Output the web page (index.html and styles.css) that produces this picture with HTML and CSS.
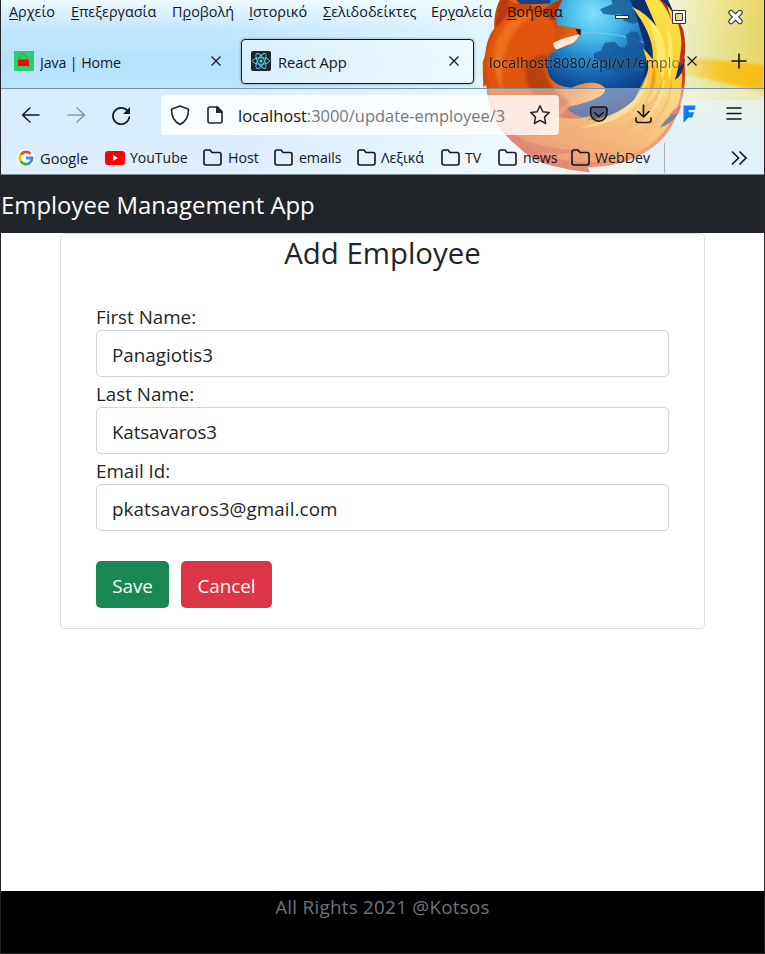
FILE: index.html
```html
<!DOCTYPE html>
<html lang="el">
<head>
<meta charset="utf-8">
<title>React App</title>
<link rel="stylesheet" href="styles.css">
</head>
<body>
<div class="window">
<header class="browser">
  <svg class="theme" viewBox="0 0 765 175" aria-hidden="true">
    <defs>
      <linearGradient id="fur" x1="0" y1="0" x2=".6" y2="1"><stop offset="0" stop-color="#ee6a1c"/><stop offset=".35" stop-color="#dc4a0c"/><stop offset=".7" stop-color="#d0350c"/><stop offset="1" stop-color="#e5601c"/></linearGradient>
      <radialGradient id="sea" gradientUnits="userSpaceOnUse" cx="370" cy="40" r="300"><stop offset="0" stop-color="#7fe0fb"/><stop offset=".25" stop-color="#4cbcea"/><stop offset=".5" stop-color="#1c7cc4"/><stop offset=".75" stop-color="#0f4c98"/><stop offset="1" stop-color="#0a2c6c"/></radialGradient>
      <linearGradient id="flame" gradientUnits="userSpaceOnUse" x1="560" y1="30" x2="340" y2="500"><stop offset="0" stop-color="#ffe048"/><stop offset=".4" stop-color="#fac62e"/><stop offset=".65" stop-color="#f59c20"/><stop offset="1" stop-color="#e4601a"/></linearGradient>
      <linearGradient id="arm" gradientUnits="userSpaceOnUse" x1="200" y1="200" x2="400" y2="280"><stop offset="0" stop-color="#c9480c"/><stop offset=".5" stop-color="#ea7a26"/><stop offset="1" stop-color="#fbae58"/></linearGradient>
      <linearGradient id="pale" x1="0" y1="0" x2="0" y2="1"><stop offset="0" stop-color="#cdeaf8" stop-opacity="0"/><stop offset=".6" stop-color="#cdeaf8" stop-opacity=".9"/><stop offset="1" stop-color="#cdeaf8"/></linearGradient>
      <linearGradient id="sun" x1="0" y1="0" x2="1" y2="0"><stop offset="0" stop-color="#ecd650" stop-opacity="0"/><stop offset=".5" stop-color="#ecd650" stop-opacity=".5"/><stop offset="1" stop-color="#e8cf48" stop-opacity=".85"/></linearGradient>
      <linearGradient id="gold" x1="0" y1="0" x2="1" y2="0"><stop offset="0" stop-color="#fabb08" stop-opacity="0"/><stop offset=".5" stop-color="#fabb08" stop-opacity=".8"/><stop offset="1" stop-color="#fabb08"/></linearGradient>
      <filter id="soft" x="-30%" y="-30%" width="160%" height="160%"><feGaussianBlur stdDeviation="5"/></filter>
      <filter id="edge"><feGaussianBlur stdDeviation="1.500"/></filter>
    </defs>
    <g transform="translate(470 0) scale(.33333)">
      <path d="M600 0H920V300H600Z" fill="url(#sun)"/>
      <path d="M600 175Q770 175 940 205V300Q800 250 600 215Z" fill="url(#gold)" filter="url(#soft)"/>
      <path d="M0 225Q60 205 120 195" fill="none" stroke="#f6e3b4" stroke-width="12" opacity=".5" filter="url(#soft)"/>
      <path d="M500 250H920V530H500Z" fill="url(#pale)"/>
      <g filter="url(#edge)">
        <path d="M95-10Q70 35 73 85Q48 120 46 165L38 185Q38 225 40 262L48 250Q50 285 60 325Q90 400 145 440Q195 490 262 500Q310 513 360 517L352 502Q450 500 510 465Q590 425 618 350Q655 265 642 180L632 90L590 10L570-10Z" fill="url(#fur)"/>
        <path d="M180-10L245 20V85L230 230Q270 330 330 350Q450 370 520 290L600 150L540-10Z" fill="url(#sea)"/>
        <path d="M130-10H245L240 10Q180 15 150 12Z" fill="#1c3f86"/>
        <path d="M335 100Q420 90 530 130" fill="none" stroke="#8fdcf5" stroke-width="4" opacity=".5"/>
        <path d="M420-10L428 12 408 20 390 28 400 42 430 45 452 42 462 62 492 72 512 60 500 20 490-10ZM372 160L392 152 405 128 435 125 450 142 465 143 472 130 468 105 485 93 505 98 512 125 535 150 530 235 500 212 482 222 455 235 440 218 432 209 405 213 398 190 385 180 372 177Z" fill="#155893" opacity=".8"/>
        <path d="M478-10H590L632 85L618 260L500 330Q535 200 522 130Q505 60 478-10Z" fill="#0a2f70"/>
        <path d="M560-12Q615 30 640 90Q650 140 642 180L625 130L580 40Z" fill="#c62f10"/>
        <path d="M486 20Q530 40 560 80L520 -10H560Q590 20 608 70L592 18Q634 62 634 135L622 235L636 215Q640 290 610 350Q560 450 440 480Q300 505 200 455Q140 420 110 370Q200 420 262 350Q320 365 370 345L350 362Q440 350 492 300Q530 250 535 205Q528 175 520 145L548 178Q555 110 486 20Z" fill="url(#flame)"/>
        <path d="M560 80Q600 130 578 235L560 180Q565 130 535 60ZM596 90Q618 130 600 240L588 190Q602 150 590 95Z" fill="#fff07a" opacity=".75"/>
        <path d="M548 178Q575 250 520 320Q570 285 575 235Q590 320 480 390Q420 425 340 420Q440 400 500 345Q550 290 548 178ZM604 240Q610 320 540 390Q480 440 400 455Q520 410 575 330Q600 285 604 240Z" fill="#ed8d1c" opacity=".7"/>
        <path d="M534 215Q535 270 490 322Q430 375 330 385Q440 350 492 300ZM585 240Q580 320 500 385Q570 310 575 245Z" fill="#ffe578" opacity=".6"/>
        <path d="M645 175Q642 225 615 240L628 190ZM628 330Q595 345 570 382Q600 375 622 345Z" fill="#1c2f6e"/>
        <path d="M640 190L642 150 628 200ZM634 315Q612 325 596 348L626 340Z" fill="#c23222"/>
        <path d="M60 325Q100 400 190 430Q270 455 350 450Q270 470 200 455Q290 495 420 485L352 502L360 517Q310 513 262 500Q195 490 145 440Q85 395 60 325Z" fill="#cf3414" opacity=".75"/>
        <path d="M95-10Q70 30 74 84Q54 110 48 150L44 195Q40 240 44 262L52 245Q55 320 100 360Q190 410 262 352L295 320Q367 306 395 285Q410 275 403 262Q390 247 365 248Q340 247 303 263Q262 262 242 235Q225 205 232 180Q240 155 265 148L290 138Q325 130 332 95Q325 82 300 81L262 76Q250 40 275-2Q240 8 215 30Q180 10 135 10Z" fill="url(#arm)"/>
        <path d="M100 60Q150 15 215 32Q250 55 255 85Q262 120 235 160Q205 210 240 262Q262 300 300 316Q270 350 235 365Q140 390 85 330Q40 260 50 160Q60 95 100 60Z" fill="#e2540f" filter="url(#soft)"/>
        <path d="M110 70Q150 30 200 45Q140 70 115 130Q85 200 100 280Q55 200 80 120Z" fill="#f57f2c" opacity=".6" filter="url(#soft)"/>
        <path d="M165 190Q160 290 240 325Q280 315 300 305Q240 270 222 215Q222 185 235 165Q190 160 165 190Z" fill="#a33208" opacity=".6" filter="url(#soft)"/>
        <path d="M222 40Q240 10 278-4Q262 30 250 62Z" fill="#b83010"/>
        <path d="M250 128Q285 112 328 103Q320 130 290 136L262 148Q250 145 250 128Z" fill="#fbe8d8"/>
        <path d="M316 86L333 88 332 106 324 102Z" fill="#251d23"/>
        <path d="M76 84L90 0H112Q120 40 82 78Z" fill="#b93a13"/>
      </g>
    </g>
  </svg>

  <nav class="menubar">
    <span class="menus"><span><u>Α</u>ρχείο</span><span><u>Ε</u>πεξεργασία</span><span>Π<u>ρ</u>οβολή</span><span><u>Ι</u>στορικό</span><span><u>Σ</u>ελιδοδείκτες</span><span>Ερ<u>γ</u>αλεία</span><span><u>Β</u>οήθεια</span></span>
    <svg class="wincontrols" viewBox="610 0 140 30" width="140" height="30">
      <rect x="615.500" y="15.500" width="13" height="3" fill="#fff" stroke="#333"/>
      <path d="M672.500 10.500h13v13h-13z" fill="#fff" stroke="#333"/><path d="M675.500 13.500h7v7h-7z" fill="#e9d98a" stroke="#333"/>
      <path d="M731 12.500l9 9M740 12.500l-9 9" stroke="#333" stroke-width="5.400" stroke-linecap="round"/>
      <path d="M731 12.500l9 9M740 12.500l-9 9" stroke="#fff" stroke-width="3.200" stroke-linecap="round"/>
    </svg>
  </nav>

  <div class="tabs">
    <div class="tab first">
      <svg width="20" height="20" viewBox="0 0 20 20"><path fill="#2ecc71" d="M0 0h20v20H0z"/><path d="M5 8l4-6 5 6" fill="none" stroke="#a06a35"/><path fill="#f00808" d="M4 8.500h11V15H4z"/></svg>
      <span class="title">Java | Home</span>
      <svg class="x" viewBox="0 0 12 12"><path d="M1.500 1.500l9 9m0-9l-9 9"/></svg>
    </div>
    <div class="tab active">
      <svg width="20" height="20" viewBox="0 0 20 20"><rect width="20" height="20" rx="2" fill="#20232a"/><g fill="none" stroke="#61dafb" stroke-width=".9"><ellipse cx="10" cy="10" rx="8.500" ry="3.300"/><ellipse cx="10" cy="10" rx="8.500" ry="3.300" transform="rotate(60 10 10)"/><ellipse cx="10" cy="10" rx="8.500" ry="3.300" transform="rotate(120 10 10)"/></g><circle cx="10" cy="10" r="1.500" fill="#61dafb"/></svg>
      <span class="title">React App</span>
      <svg class="x" viewBox="0 0 12 12"><path d="M1.500 1.500l9 9m0-9l-9 9"/></svg>
    </div>
    <div class="tab last">
      <span class="title fade">localhost:8080/api/v1/emplo</span>
      <svg class="x" viewBox="0 0 12 12"><path d="M1.500 1.500l9 9m0-9l-9 9"/></svg>
    </div>
    <svg class="plus" viewBox="0 0 16 16" width="16" height="16"><path d="M8 .5v15M.5 8h15" fill="none" stroke="#15141a" stroke-width="1.600"/></svg>
  </div>

  <div class="toolbar">
    <svg class="navicons" width="161" height="50" viewBox="1 90 161 50"><g fill="none" stroke="#111820" stroke-width="1.500" stroke-linecap="round" stroke-linejoin="round"><path d="M39 115H23m7-7l-7.500 7 7.500 7"/><path d="M68 115h16m-7-7l7.500 7-7.500 7" stroke="#8b9aa7"/><path d="M127.500 110.800A8.200 8.200 0 1 0 129.300 117" stroke-width="1.700"/></g><path d="M130 107v7h-7z" fill="#111820"/></svg>
    <div class="urlbar">
      <svg width="70" height="40" viewBox="161 94 70 40"><g fill="none" stroke="#25252c" stroke-width="1.600" stroke-linejoin="round"><path d="M180 105l8.500 3.200c0 7-2.300 12.300-8.500 15.300-6.200-3-8.500-8.300-8.500-15.300z"/><path d="M210 106h7.500l4.500 4.500V120q0 2-2 2h-10q-2 0-2-2v-12q0-2 2-2z"/></g><path d="M216 105l7 7h-7z" fill="#25252c"/></svg>
      <span class="url"><b>localhost</b>:3000/update-employee/3</span>
      <svg class="star" viewBox="0 0 22 22" width="22" height="22"><path d="M11 1.800l2.800 5.900 6.400.9-4.700 4.500 1.200 6.400-5.700-3.100-5.700 3.100 1.200-6.400-4.700-4.500 6.400-.9z" fill="none" stroke="#25252c" stroke-width="1.500" stroke-linejoin="round"/></svg>
    </div>
    <svg class="actions" viewBox="580 90 170 50" width="170" height="50"><g fill="none" stroke="#15141a" stroke-width="1.600" stroke-linecap="round" stroke-linejoin="round"><path d="M593 107h11.500q2.500 0 2.500 2.500v3.500a8.200 8.200 0 0 1-16.400 0v-3.500q0-2.500 2.400-2.500z" fill="#15141a" fill-opacity=".3"/><path d="M594.500 112.500l4.300 4 4.300-4M643.500 105v11.500m-5.500-5l5.500 5.500 5.500-5.500M636 118v2q0 2.500 2.500 2.500h10q2.500 0 2.500-2.500v-2"/><path d="M727 108h14M727 113.500h14M727 119h14" stroke-width="1.500"/></g><path d="M683.500 105.500H695.500l-.8 4.500h-6v2.300h5.500l-2 5.200h-3.700l-5 5.300v-16z" fill="#0d7bff"/></svg>
  </div>

  <nav class="bookmarks">
    <span class="bm google"><svg width="18" height="18" viewBox="0 0 18 18"><circle cx="9" cy="9" r="9" fill="#fff"/><g fill="none" stroke-width="2.800"><path d="M3.800 5.700A6 6 0 0 1 13.300 4.800" stroke="#ea4335"/><path d="M3.800 5.700a6.200 6.200 0 0 0 0 6.600" stroke="#fbbc05"/><path d="M3.800 12.200a6 6 0 0 0 9.200 1.400" stroke="#34a853"/><path d="M9 9h6a6 6 0 0 1-2 4.600" stroke="#4285f4"/></g></svg>Google</span>
    <span class="bm youtube"><svg width="20" height="14" viewBox="0 0 20 14"><rect width="20" height="14" rx="3" fill="#f00"/><path d="M8 4l5 3-5 3z" fill="#fff"/></svg>YouTube</span>
    <span class="bm host"><svg class="folder" viewBox="0 0 19 17"><path d="M1 3q0-2 2-2h4l2 2.500h7q2 0 2 2V14q0 2-2 2H3q-2 0-2-2z"/></svg>Host</span>
    <span class="bm emails"><svg class="folder" viewBox="0 0 19 17"><path d="M1 3q0-2 2-2h4l2 2.500h7q2 0 2 2V14q0 2-2 2H3q-2 0-2-2z"/></svg>emails</span>
    <span class="bm lexika"><svg class="folder" viewBox="0 0 19 17"><path d="M1 3q0-2 2-2h4l2 2.500h7q2 0 2 2V14q0 2-2 2H3q-2 0-2-2z"/></svg>Λεξικά</span>
    <span class="bm tv"><svg class="folder" viewBox="0 0 19 17"><path d="M1 3q0-2 2-2h4l2 2.500h7q2 0 2 2V14q0 2-2 2H3q-2 0-2-2z"/></svg>TV</span>
    <span class="bm news"><svg class="folder" viewBox="0 0 19 17"><path d="M1 3q0-2 2-2h4l2 2.500h7q2 0 2 2V14q0 2-2 2H3q-2 0-2-2z"/></svg>news</span>
    <span class="bm webdev"><svg class="folder" viewBox="0 0 19 17"><path d="M1 3q0-2 2-2h4l2 2.500h7q2 0 2 2V14q0 2-2 2H3q-2 0-2-2z"/></svg>WebDev</span>
    <svg class="more" viewBox="0 0 18 16" width="18" height="16"><path d="M2 1.500L8.500 8 2 14.500M9.500 1.500L16 8l-6.500 6.500" fill="none" stroke="#15141a" stroke-width="1.600"/></svg>
  </nav>
</header>

<div class="appbar"><span>Employee Management App</span></div>
<main>
  <form class="card">
    <h3><span>Add Employee</span></h3>
    <label for="first">First Name:</label>
    <input id="first" value="Panagiotis3">
    <label for="last">Last Name:</label>
    <input id="last" value="Katsavaros3">
    <label for="email">Email Id:</label>
    <input id="email" value="pkatsavaros3@gmail.com">
    <div class="buttons"><button type="button" class="save">Save</button><button type="button" class="cancel">Cancel</button></div>
  </form>
</main>
<footer><span>All Rights 2021 @Kotsos</span></footer>
</div>
</body>
</html>
```
FILE: styles.css
```css
* { box-sizing: border-box; }
body { margin: 0; font-family: "Open Sans", "Noto Sans", sans-serif; font-size: 18.8px; color: #212529; }
svg { display: block; flex: none; }
.window { width: 765px; height: 954px; display: flex; flex-direction: column; border: 1px solid #24262a; border-top: 0; background: #fff; overflow: hidden; }

.browser { position: relative; height: 175px; flex: none; margin: 0 -1px; border-left: 1px solid #24262a; border-right: 1px solid #24262a; border-bottom: 1px solid #7d8b95; font-size: 14.2px; color: #15141a; background: linear-gradient(180deg, #eef9ff 0, #c3e7ff 28px, #b5e2ff 60px, #bde5ff 90px, #c3e2fd 140px, #cbe7fd 175px); overflow: hidden; }
.browser::before { content: ""; position: absolute; inset: 0; background: linear-gradient(90deg, transparent 30%, rgba(235, 250, 255, .75) 63%, rgba(244, 245, 205, .8) 90%, rgba(235, 236, 180, .8)); }
.theme { position: absolute; left: -1px; top: 0; width: 765px; height: 175px; }
.menubar, .tabs, .toolbar, .bookmarks { position: relative; display: flex; align-items: center; }
.menubar { height: 36px; padding-left: 8px; align-items: flex-start; }
.menus { display: grid; grid-template-columns: 62px 101px 77px 74px 108px 76px 60px; line-height: 24px; width: 601px; white-space: nowrap; font-size: 14.4px; }
.menus u { text-underline-offset: 2px; text-decoration-thickness: 1px; }
.wincontrols { fill: none; }

.tabs { height: 53px; padding-bottom: 2px; border-bottom: 1px solid #7392a8; }
.tab { height: 45px; display: flex; align-items: center; white-space: nowrap; }
.tab .title { flex: 1; overflow: hidden; padding-top: 2px; }
.tab.first { width: 240px; padding: 0 19px 0 13px; }
.tab.first .title { margin-left: 6px; letter-spacing: -.1px; }
.tab.active { width: 233px; padding: 0 13px 0 9px; border: 1px solid #15141a; border-radius: 4px; background: rgba(255, 255, 255, .45); box-shadow: 0 0 3px rgba(0, 0, 0, .4); }
.tab.active .title { margin-left: 7px; font-size: 14.7px; }
.tab.last { width: 224px; padding-left: 15px; }
.fade { letter-spacing: .1px; -webkit-mask-image: linear-gradient(90deg, #000 80%, rgba(0, 0, 0, .35)); mask-image: linear-gradient(90deg, #000 80%, rgba(0, 0, 0, .35)); margin-right: 5px; text-shadow: 0 0 2px rgba(255, 255, 255, .35); }
.x { width: 12px; height: 12px; fill: none; stroke: #15141a; stroke-width: 1.2; }
.plus { margin-left: 33px; }

.toolbar { height: 51px; background: rgba(250, 250, 255, .42); }
.navicons { margin-right: -1px; }
.urlbar { width: 398px; height: 40px; display: flex; align-items: center; background: rgba(255, 255, 255, .8); border-radius: 4px; }
.url { margin-left: 7px; padding-top: 2px; flex: 1; font-size: 16.45px; color: #77787e; white-space: nowrap; }
.url b { font-weight: 400; color: #15141a; }
.star { margin-right: 8px; }
.actions { margin-left: 21px; }

.bookmarks { height: 35px; padding-left: 16px; background: rgba(250, 250, 255, .42); }
.bm { display: flex; align-items: center; gap: 6px; height: 30px; line-height: 20px; white-space: nowrap; }
.folder { width: 19px; height: 17px; fill: none; stroke: #15141a; stroke-width: 1.6; }
.google { width: 88px; font-size: 14.7px; gap: 5px; }
.youtube { width: 98px; gap: 5px; font-size: 14px; }
.host { width: 71px; }
.emails { width: 83px; letter-spacing: -.1px; }
.lexika { width: 84px; gap: 5px; }
.tv { width: 57px; gap: 5px; }
.news { width: 73px; }
.webdev { width: 94px; gap: 5px; border-right: 1px solid #a5b2b8; }
.more { margin-left: 65px; }

.appbar { height: 58px; flex: none; background: #212529; color: #fff; font-size: 23.9px; line-height: 60px; }
main { height: 658px; flex: none; padding: 0 59px; }
.card { height: 396px; padding: 0 35px; border: 1px solid #dfdfdf; border-radius: 5px; display: flex; flex-direction: column; }
h3 { margin: 0 0 32px; height: 36px; font-size: 29.4px; line-height: 39px; font-weight: 400; text-align: center; }
label { height: 30px; line-height: 30px; flex: none; }
input { height: 47px; flex: none; margin: -2px 0 2px; padding: 2px 15px 0; border: 1px solid #ced4da; border-radius: 5px; background: #fff; color: #212529; font: inherit; }
#last { letter-spacing: -.15px; }
#email { letter-spacing: .1px; }
.buttons { display: flex; gap: 12px; margin-top: 28px; }
button { height: 47px; padding: 3px 0 0; border: 0; border-radius: 5px; color: #fff; font: inherit; }
.save { width: 73px; background: #198754; }
.cancel { width: 91px; background: #dc3545; }
footer { flex: 1; background: #000; color: #6c757d; text-align: center; line-height: 33px; letter-spacing: .28px; }
```
